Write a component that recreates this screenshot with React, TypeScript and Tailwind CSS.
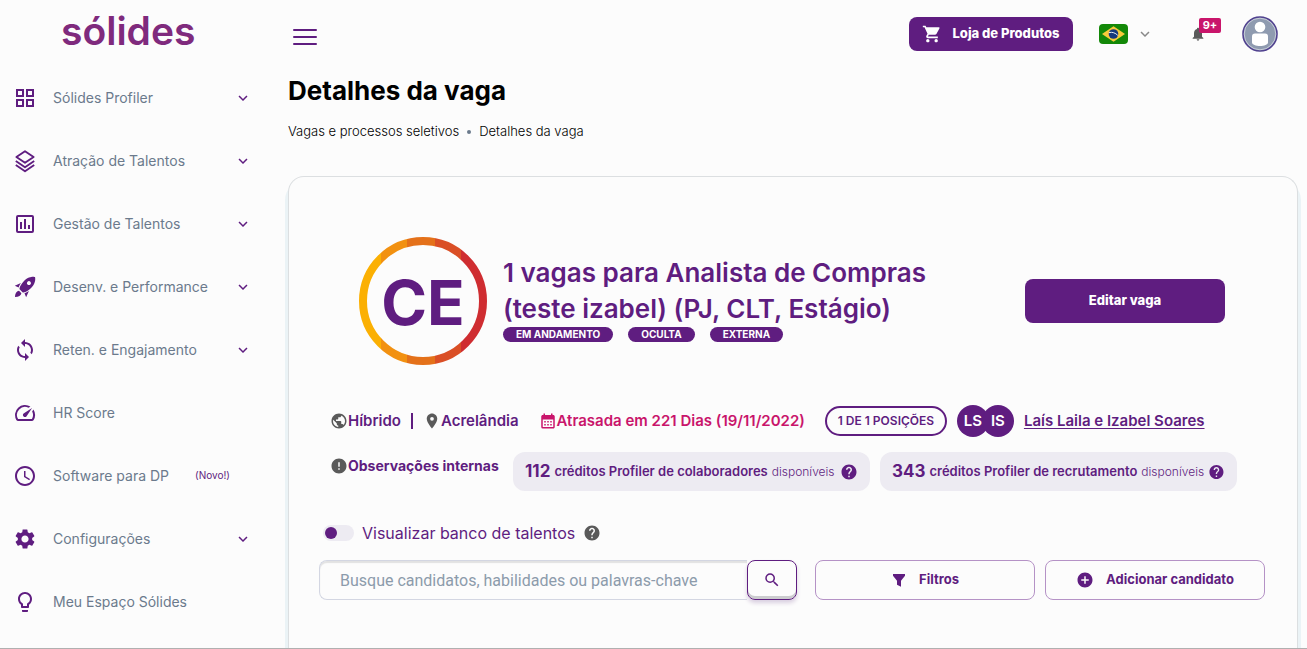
import type { ComponentType, ReactNode } from 'react';
import {
  MdAccessTime,
  MdAddCircle,
  MdCalendarMonth,
  MdError,
  MdExpandMore,
  MdHelp,
  MdLightbulbOutline,
  MdNotifications,
  MdOutlineGridView,
  MdPlace,
  MdPublic,
  MdSearch,
  MdSettings,
  MdShoppingCart,
  MdSpeed,
  MdSync,
} from 'react-icons/md';

type IconProps = { className?: string };

function LayersIcon({ className }: IconProps) {
  return (
    <svg viewBox="0 0 24 24" className={className} fill="none" stroke="currentColor" strokeWidth="1.9" strokeLinejoin="round">
      <path d="M12 2.2 20.6 8 12 13.8 3.4 8Z" />
      <path d="M2.8 12 12 18.2 21.2 12" />
      <path d="M2.8 16 12 22.2 21.2 16" />
    </svg>
  );
}

function ChartIcon({ className }: IconProps) {
  return (
    <svg viewBox="0 0 24 24" className={className} fill="currentColor">
      <path fillRule="evenodd" d="M5 3h14a2 2 0 0 1 2 2v14a2 2 0 0 1-2 2H5a2 2 0 0 1-2-2V5a2 2 0 0 1 2-2ZM5 5v14h14V5Z" />
      <path d="M7 10h2v7H7ZM11 7h2v10h-2ZM15 13h2v4h-2Z" />
    </svg>
  );
}

function RocketIcon({ className }: IconProps) {
  return (
    <svg viewBox="0 0 24 24" className={className} fill="currentColor">
      <path d="M13.13 22.19 11.5 18.36C13.07 17.78 14.54 17 15.9 16.09L13.13 22.19M5.64 12.5 1.81 10.87 7.91 8.1C7 9.46 6.22 10.93 5.64 12.5M22 2C22 2 16.66.27 11 5.93 8.81 8.12 7.5 10.53 6.65 12.64 6.37 13.39 6.56 14.21 7.11 14.77L9.24 16.89C9.79 17.45 10.61 17.63 11.36 17.35 13.5 16.53 15.88 15.19 18.07 13 23.73 7.34 22 2 22 2M14.54 9.46C13.76 8.68 13.76 7.41 14.54 6.63S16.59 5.85 17.37 6.63 18.15 8.68 17.37 9.46 15.32 10.24 14.54 9.46" />
      <path d="M6 15.800C3.800 16 2 18.500 2 22 5.800 22 8 20.400 8.400 18.300Z" />
    </svg>
  );
}

function FunnelIcon({ className }: IconProps) {
  return (
    <svg viewBox="0 0 24 24" className={className} fill="currentColor">
      <path d="M3 3h18v2.6L15 13v9l-6-3v-6L3 5.6Z" />
    </svg>
  );
}

function BrazilFlag() {
  return (
    <svg viewBox="0 0 29 20" className="w-[29px] h-5" aria-hidden="true">
      <rect width="29" height="20" rx="4" fill="#138808" />
      <path d="M14.5 2.2 26 10 14.5 17.8 3 10Z" fill="#f7cb3b" />
      <circle cx="14.5" cy="10" r="4.8" fill="#17397c" />
      <path d="M10 8.6c3.200-.8 6.400.2 8.800 2.800" fill="none" stroke="#e8eef5" strokeWidth="1" />
    </svg>
  );
}

function CompanyBadge() {
  return (
    <svg viewBox="0 0 128 128" className="w-32 h-32 shrink-0" role="img" aria-label="CE">
      <defs>
        <linearGradient id="ring" gradientUnits="userSpaceOnUse" x1="0" y1="0" x2="128" y2="0">
          <stop offset="17.200%" stopColor="#fbb003" />
          <stop offset="17.200%" stopColor="#f29111" />
          <stop offset="37.500%" stopColor="#f29111" />
          <stop offset="37.500%" stopColor="#e4711a" />
          <stop offset="59.400%" stopColor="#e4711a" />
          <stop offset="59.400%" stopColor="#da4f26" />
          <stop offset="79.700%" stopColor="#da4f26" />
          <stop offset="79.700%" stopColor="#cf2d31" />
        </linearGradient>
      </defs>
      <circle cx="64" cy="64" r="60" fill="none" stroke="url(#ring)" strokeWidth="8" />
      <text x="64" y="88" textAnchor="middle" fontSize="62" className="font-bold" fill="#5f1d80">
        CE
      </text>
    </svg>
  );
}

type NavItem = { label: string; icon: ComponentType<IconProps>; expandable?: boolean; tag?: string };

const navItems: NavItem[] = [
  { label: 'Sólides Profiler', icon: MdOutlineGridView, expandable: true },
  { label: 'Atração de Talentos', icon: LayersIcon, expandable: true },
  { label: 'Gestão de Talentos', icon: ChartIcon, expandable: true },
  { label: 'Desenv. e Performance', icon: RocketIcon, expandable: true },
  { label: 'Reten. e Engajamento', icon: MdSync, expandable: true },
  { label: 'HR Score', icon: MdSpeed },
  { label: 'Software para DP', icon: MdAccessTime, tag: '(Novo!)' },
  { label: 'Configurações', icon: MdSettings, expandable: true },
  { label: 'Meu Espaço Sólides', icon: MdLightbulbOutline },
];

const statuses = ['EM ANDAMENTO', 'OCULTA', 'EXTERNA'];

const credits = [
  { amount: '112', label: 'créditos Profiler de colaboradores' },
  { amount: '343', label: 'créditos Profiler de recrutamento' },
];

function Sidebar() {
  return (
    <aside className="w-[284px] shrink-0">
      <a href="#" className="block h-[66px] pl-[61px] text-[39px] leading-[62px] font-semibold text-[#7f2a7d]">
        sólides
      </a>
      <nav>
        {navItems.map((item) => {
          const Icon = item.icon;
          return (
            <a key={item.label} href="#" className="h-[63px] pl-[13px] pr-8 flex items-center text-[#6b7a8c]">
              <Icon className="w-6 h-6 text-[#5f1d80]" />
              <span className="ml-4 text-sm">{item.label}</span>
              {item.tag && <span className="ml-[26px] text-[10px] text-[#5f1d80]">{item.tag}</span>}
              {item.expandable && <MdExpandMore className="ml-auto w-[18px] h-[18px] text-[#5f1d80]" />}
            </a>
          );
        })}
      </nav>
    </aside>
  );
}

function Header() {
  return (
    <header className="h-[68px] pl-[9px] pr-[29px] flex items-center">
      <button aria-label="Menu" className="mt-1.5 w-6 flex flex-col gap-[5px]">
        <span className="h-0.5 rounded bg-[#5f1d80]" />
        <span className="h-0.5 rounded bg-[#5f1d80]" />
        <span className="h-0.5 rounded bg-[#5f1d80]" />
      </button>
      <button className="ml-auto w-[164px] h-[34px] rounded-lg bg-[#5f1d80] text-white text-[13px] font-extrabold flex items-center justify-center gap-2.5">
        <MdShoppingCart className="w-5 h-5" />
        Loja de Produtos
      </button>
      <button aria-label="Idioma" className="ml-[26px] flex items-center gap-2">
        <BrazilFlag />
        <MdExpandMore className="w-[18px] h-[18px] text-[#888]" />
      </button>
      <button aria-label="Notificações" className="relative ml-9 mr-9">
        <MdNotifications className="w-4 h-4 text-[#5a5a5a]" />
        <span className="absolute left-[9px] -top-2 w-[22px] h-[15px] rounded-xs bg-[#c9156b] text-white text-[11px] leading-[15px] font-bold text-center">
          9+
        </span>
      </button>
      <button aria-label="Perfil">
        <svg viewBox="0 0 36 36" className="w-9 h-9">
          <circle cx="18" cy="18" r="17" fill="#8f9bb0" stroke="#50418f" strokeWidth="1.600" />
          <circle cx="18" cy="18" r="15.800" fill="none" stroke="#fff" strokeWidth="0.500" />
          <circle cx="18" cy="11" r="5.300" fill="#fff" />
          <path d="M10 20.500a3 3 0 0 1 3-3h10a3 3 0 0 1 3 3v6c0 2-4 3.500-8 3.500s-8-1.500-8-3.500Z" fill="#fff" />
        </svg>
      </button>
    </header>
  );
}

function OutlineButton({ children }: { children: ReactNode }) {
  return (
    <button className="w-[220px] h-10 rounded-lg border border-[#b592c6] text-[13px] font-bold flex items-center justify-center gap-3">
      {children}
    </button>
  );
}

export default function App() {
  return (
    <div className="min-h-screen flex bg-[#fcfcfc] border-b border-[#b0b0b0] font-['Inter',sans-serif]">
      <Sidebar />
      <main className="flex-1 min-w-0 flex flex-col overflow-hidden">
        <Header />
        <div className="pl-1 text-black">
          <h1 className="text-[26px] leading-[46px] font-bold">Detalhes da vaga</h1>
          <nav aria-label="Trilha" className="mt-[9px] mb-[35px] h-[18px] flex items-center gap-2 text-[13px] font-light">
            <a href="#">Vagas e processos seletivos</a>
            <span className="w-1 h-1 rounded-full bg-[#6b7a8c]" />
            <span>Detalhes da vaga</span>
          </nav>
        </div>

        <section className="flex-1 ml-1 mr-[9px] pl-[30px] pr-8 pt-[60px] rounded-t-2xl border border-b-0 border-[#dcdfe1] bg-[#fcfcfc] shadow-[0_8px_0_3px_#ebf3f6] text-[#5f1d80]">
          <div className="px-10 flex items-center gap-4">
            <CompanyBadge />
            <div className="w-[450px] pb-1.5">
              <h2 className="text-[26px] leading-9 font-semibold">
                1 vagas para Analista de Compras (teste izabel) (PJ, CLT, Estágio)
              </h2>
              <div className="flex gap-[15px]">
                {statuses.map((status) => (
                  <span key={status} className="px-[13px] rounded-full bg-[#5f1d80] text-white text-[10px] leading-[15px] font-bold">
                    {status}
                  </span>
                ))}
              </div>
            </div>
            <button className="ml-auto w-[200px] h-11 rounded-lg bg-[#5f1d80] text-white text-[13px] font-extrabold">
              Editar vaga
            </button>
          </div>

          <div className="mt-10 pl-[11px] flex items-center text-[15px] font-semibold whitespace-nowrap">
            <MdPublic className="w-[18px] h-[18px] text-[#5a5a5a]" />
            Híbrido
            <span className="mx-2.5 w-0.5 h-4 bg-[#5f1d80]" />
            <MdPlace className="w-[18px] h-[18px] text-[#5a5a5a]" />
            Acrelândia
            <span className="ml-5 flex items-center text-[#c9156b]">
              <MdCalendarMonth className="w-[18px] h-[18px]" />
              Atrasada em 221 Dias (19/11/2022)
            </span>
            <span className="ml-5 w-[122px] h-[30px] rounded-full border-2 border-[#5f1d80] text-xs flex items-center justify-center">
              1 DE 1 POSIÇÕES
            </span>
            <span className="ml-2.5 w-8 h-8 rounded-full bg-[#5f1d80] text-white flex items-center justify-center">LS</span>
            <span className="-ml-[7px] w-8 h-8 rounded-full bg-[#5f1d80] text-white flex items-center justify-center">IS</span>
            <a href="#" className="ml-2.5 underline underline-offset-2">
              Laís Laila e Izabel Soares
            </a>
          </div>

          <div className="mt-[15px] pl-[11px] flex items-start gap-2.5 whitespace-nowrap">
            <div className="w-[173px] h-7 flex items-center text-sm font-bold">
              <MdError className="w-[18px] h-[18px] text-[#5a5a5a]" />
              Observações internas
            </div>
            {credits.map((credit) => (
              <div key={credit.amount} className="w-[357px] h-[39px] px-3 rounded-xl bg-[#edebf2] flex items-center gap-1">
                <span className="text-[17px] font-bold">{credit.amount}</span>
                <span className="text-[13px] font-semibold">{credit.label}</span>
                <span className="text-xs font-light">disponíveis</span>
                <MdHelp className="ml-auto w-[18px] h-[18px]" />
              </div>
            ))}
          </div>

          <div className="mt-8 pl-1 h-5 flex items-center gap-2">
            <label className="flex items-center gap-2 text-base">
              <input
                type="checkbox"
                className="appearance-none w-[31px] h-4 rounded-full bg-[#edebf2] before:block before:w-3 before:h-3 before:m-0.5 before:rounded-full before:bg-[#5f1d80] checked:before:ml-[17px]"
              />
              Visualizar banco de talentos
            </label>
            <MdHelp className="w-[18px] h-[18px] text-[#5a5a5a]" />
          </div>

          <div className="mt-[17px] mb-10 flex items-center">
            <input
              type="text"
              aria-label="Busque candidatos"
              placeholder="Busque candidatos, habilidades ou palavras-chave"
              className="flex-1 min-w-0 h-10 pl-5 rounded-l-lg border border-r-0 border-[#d3d6e2] shadow-[inset_0_2px_1px_#e2e2e2] font-['Roboto',sans-serif] text-base placeholder:text-[#8c9bab]"
            />
            <button
              aria-label="Buscar"
              className="w-[50px] h-10 rounded-lg border border-[#5f1d80] flex items-center justify-center shadow-[inset_0_-3px_0_#cccccf,0_3px_4px_#d9cfe0]"
            >
              <MdSearch className="w-[18px] h-[18px]" />
            </button>
            <div className="ml-[18px] flex gap-2.5">
              <OutlineButton>
                <FunnelIcon className="w-4 h-4" />
                Filtros
              </OutlineButton>
              <OutlineButton>
                <MdAddCircle className="w-[18px] h-[18px]" />
                Adicionar candidato
              </OutlineButton>
            </div>
          </div>
        </section>
      </main>
    </div>
  );
}
